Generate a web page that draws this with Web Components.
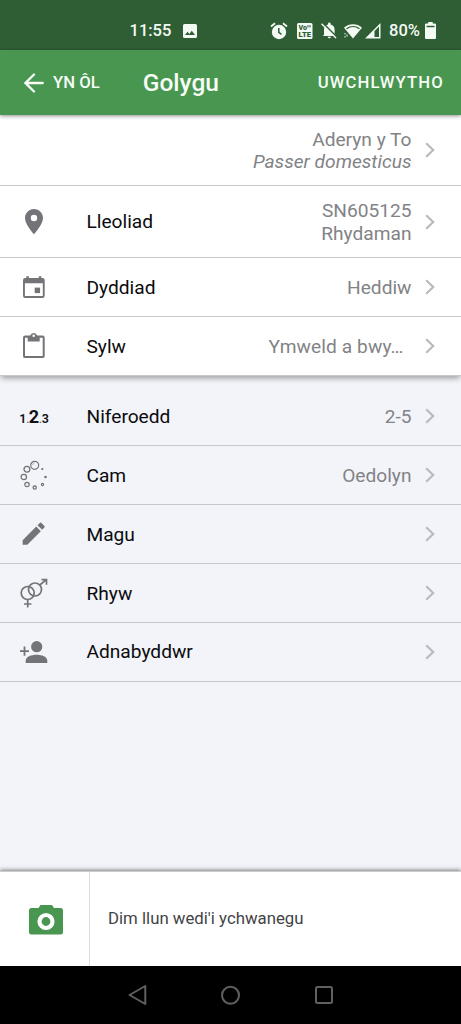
<!DOCTYPE html>
<html lang="cy">
<head>
<meta charset="utf-8">
<title>Golygu</title>
<style>
html,body{margin:0;height:100%}
body{font-family:Roboto,"Liberation Sans",sans-serif;background:#f2f4f9;overflow:hidden}
</style>
</head>
<body>
<record-page></record-page>
<script>
const define=(name,html)=>customElements.define(name,class extends HTMLElement{
  constructor(){super();this.attachShadow({mode:'open'}).innerHTML=html;}
});

const ICONS={
 pin:'<path fill-rule="evenodd" d="M15 2C10 2 6 6 6 11c0 6.500 9 16.300 9 16.300S24 17.500 24 11C24 6 20 2 15 2Zm0 12.200a3.200 3.200 0 1 1 0-6.400 3.200 3.200 0 0 1 0 6.400Z"/>',
 calendar:'<path fill-rule="evenodd" d="M7.300 4.300h2.500v1.700h10V4.300h2.500V6h1.200a2.200 2.200 0 0 1 2.200 2.200v15.600a2.200 2.200 0 0 1-2.200 2.200H6.200A2.200 2.200 0 0 1 4 23.800V8.200A2.200 2.200 0 0 1 6.200 6h1.100ZM5.900 11.200v12.900h17.900V11.200Z"/><path d="M15.700 15.600h5.400v5.500h-5.400z"/>',
 clipboard:'<path fill-rule="evenodd" d="M11.200 4.500a3.700 3.700 0 0 1 7 0h5.300a2.200 2.200 0 0 1 2.200 2.200v18.200a2.200 2.200 0 0 1-2.200 2.200H6.200A2.200 2.200 0 0 1 4 24.900V6.700a2.200 2.200 0 0 1 2.200-2.200ZM8.700 6.700H6v18.400h17.700V6.700h-3v3.900h-12Zm6-3.200a1.300 1.300 0 1 0 0 2.600 1.300 1.300 0 0 0 0-2.600Z"/>',
 stage:'<g fill="none" stroke="#737477"><circle cx="15.700" cy="5.300" r="4" stroke-width="1.200"/><circle cx="7.900" cy="9.200" r="2.900" stroke-width="1.300"/><circle cx="4.800" cy="17" r="2.700" stroke-width="1.200"/><circle cx="8" cy="24.500" r="2.200" stroke-width="1.200"/><circle cx="15.700" cy="27.600" r="1.600" stroke-width="1.300"/><circle cx="23.500" cy="24.500" r="1.100" stroke-width="1.200"/></g><circle cx="26.500" cy="17" r="1.300"/><circle cx="23.300" cy="9.100" r="1.100"/><path d="M13.500 5a2.500 2.500 0 0 1 2-2" fill="none" stroke="#999" stroke-width=".7"/>',
 pencil:'<path transform="scale(1.225)" d="M3 17.250V21h3.750L17.810 9.940l-3.750-3.750zM20.710 7.040a1 1 0 0 0 0-1.410l-2.340-2.340a1 1 0 0 0-1.410 0l-1.830 1.830 3.750 3.750z"/>',
 sex:'<g fill="none" stroke="#737477" stroke-width="1.700"><circle cx="8.700" cy="15" r="6.500"/><circle cx="16" cy="11.500" r="6.500"/><path d="M8.700 21.500v8M5 26h7.400M20.700 7l6.500-5.200M22.500 1.700h5v5"/></g>',
 person:'<circle cx="17.700" cy="9.700" r="5.600"/><path d="M6.700 26v-2.300c0-8 21.600-8 21.600 0V26z"/><path d="M5.500 9.500v9.200M1 14.100h9" stroke="#737477" stroke-width="1.800"/>'
};
customElements.define('row-icon',class extends HTMLElement{
  constructor(){super();this.attachShadow({mode:'open'});}
  connectedCallback(){
    const n=this.getAttribute('name');
    this.shadowRoot.innerHTML=`<style>:host{display:block;width:30px;height:30px}svg{display:block;overflow:visible}</style>`+(ICONS[n]?`<svg width="30" height="30" fill="#737477">${ICONS[n]}</svg>`:'');
  }
});

define('count-icon',`<style>:host{display:flex;width:30px;height:30px;align-items:baseline;justify-content:center;font-weight:600;font-size:12.500px;line-height:31px;color:#111;white-space:nowrap}b{font-size:18px;font-weight:700;margin:0 -.5px}i{font-style:normal;font-weight:400;width:3px;text-align:center;color:#555}</style><span>1</span><i>.</i><b>2</b><i>.</i><span>3</span>`);

define('list-row',`<style>
:host{display:flex;align-items:center;box-sizing:border-box;height:var(--h,58.900px);padding:0 26.500px 0 19px;border-bottom:1.500px solid #c6c7cb;font-size:19.150px}
.icon{width:30px;height:30px;margin-right:37.500px}
.label{color:#0b0b0d;flex:1;padding-top:.8px}
.value{color:#828386;text-align:right;line-height:22.500px;margin-right:13px;padding-top:2.600px}
svg{display:block}
</style><div class="icon"><slot name="icon"></slot></div><div class="label"><slot></slot></div><div class="value"><slot name="value"></slot></div><svg width="10" height="16" fill="none" stroke="#b9babd" stroke-width="2.200"><path d="M1.200 1.200 8.200 8l-7 6.800"/></svg>`);

define('status-bar',`<style>
:host{display:flex;align-items:center;box-sizing:border-box;height:50px;padding:11px 25px 0 129.500px;background:#2f5e35;color:#f4faf4;font-weight:500;font-size:16.500px}
svg{display:block;fill:#f4faf4;flex:none}.gap{flex:1}
</style><span>11:55</span>
<svg style="margin-left:11.500px" width="14" height="14"><path fill-rule="evenodd" d="M1.500 0h11A1.500 1.500 0 0 1 14 1.500v11a1.500 1.500 0 0 1-1.500 1.500h-11A1.500 1.500 0 0 1 0 12.500v-11A1.500 1.500 0 0 1 1.500 0ZM2 11h10L8.800 6.800 6.300 9.900 4.500 7.800Z"/></svg>
<span class="gap"></span>
<svg width="18" height="18"><circle cx="9" cy="10" r="7.200"/><path d="M1 4.500 5 1.200M17 4.500 13 1.200" stroke="#f4faf4" stroke-width="1.800"/><path d="M8.800 6v4.300l2.700 2" fill="none" stroke="#2f5e35" stroke-width="1.500"/></svg>
<svg style="margin-left:8.500px" width="16" height="16"><rect width="15.500" height="16" rx="1.500"/><text x="1.400" y="6.800" font-size="6.400" font-weight="900" fill="#2f5e35" font-family="Roboto" textLength="8.500" lengthAdjust="spacingAndGlyphs">Vo</text><path d="M11 2v2.500M13 2v2.500" stroke="#2f5e35"/><text x="1.500" y="14.300" font-size="6.600" font-weight="900" fill="#2f5e35" font-family="Roboto" textLength="12.500" lengthAdjust="spacingAndGlyphs">LTE</text></svg>
<svg style="margin-left:8px" width="17" height="17"><path d="M3 13V7.500a5.200 5.200 0 0 1 4-5V1.800a1.300 1.300 0 0 1 2.600 0v.7a5.200 5.200 0 0 1 4 5V13l1.400 1H1.500ZM6.700 14.700h3.200a1.600 1.600 0 0 1-3.200 0Z"/><path d="M1.300.5 16.300 15.500" stroke="#2f5e35" stroke-width="1.700"/><path d="M.5 1.700 15 16" stroke="#f4faf4" stroke-width="1.500"/></svg>
<svg style="margin-left:6.500px" width="18" height="16"><path d="M0 4.800a13.500 13.500 0 0 1 18 0L9 15.500Z"/><path d="M2.500 5.700a11 11 0 0 1 13 0" fill="none" stroke="#2f5e35" stroke-width="1.200"/><path d="M1 10v1.500M1 13v1.500M3 11.500v2" stroke="#f4faf4"/></svg>
<svg style="margin-left:3px" width="16" height="16"><path fill-rule="evenodd" d="M0 15.500 15.500 0v15.500ZM9.500 8v6H14V3.600Z"/></svg>
<span style="margin-left:8px">80%</span>
<svg style="margin-left:5px" width="11" height="17"><path fill-rule="evenodd" d="M3.300 0h4.400v1.500h1.800A1.400 1.400 0 0 1 11 3v12.500a1.400 1.400 0 0 1-1.500 1.500h-8A1.400 1.400 0 0 1 0 15.500V3a1.400 1.400 0 0 1 1.500-1.500h1.800ZM1.500 3.700v1.600h8V3.700Z"/></svg>`);

define('app-header',`<style>
:host{display:flex;align-items:center;box-sizing:border-box;height:65px;padding:0 17px 0 24px;background:#48964f;color:#f7fcf7;font-weight:500;font-size:16.700px;position:relative;z-index:2;box-shadow:0 1px 4px rgba(0,0,0,.45)}
svg{display:block;margin-right:9px}h1{font-size:24.500px;font-weight:500;margin:0 0 0 43px;flex:1;line-height:28px}.up{letter-spacing:1.150px}
</style><svg width="20" height="20" fill="none" stroke="#f7fcf7" stroke-width="2.300" stroke-linecap="round"><path d="M18.800 10H1.500M10 1.500 1.500 10l8.500 8.500"/></svg><span>YN ÔL</span><h1>Golygu</h1><span class="up">UWCHLWYTHO</span>`);

define('photo-footer',`<style>
:host{display:flex;align-items:center;height:95px;background:#fff;border-top:1px solid #ccc;box-sizing:border-box;box-shadow:0 -1px 4px rgba(0,0,0,.5);color:#424346;font-size:16.800px;position:relative}
.cam{display:flex;align-items:center;box-sizing:border-box;width:90px;height:100%;padding:2px 0 0 28.600px;border-right:1px solid #ddd}.msg{padding:0 0 2px 18px;line-height:20px}
</style><div class="cam"><svg width="35" height="30"><path fill="#48964f" d="M11.500 0h11.500l2 3h6.500a2.500 2.500 0 0 1 2.500 2.500v21.500a2.500 2.500 0 0 1-2.500 2.500h-29A2.500 2.500 0 0 1 0 27V5.500A2.500 2.500 0 0 1 2.500 3H9.500Z"/><circle cx="17" cy="16.500" r="6.500" fill="none" stroke="#fff" stroke-width="4.200"/></svg></div><div class="msg">Dim llun wedi'i ychwanegu</div>`);

define('nav-bar',`<style>
:host{display:flex;align-items:center;justify-content:space-between;box-sizing:border-box;height:58px;padding:0 126px 0 127px;background:#000}
svg{display:block;fill:none;stroke:#606060;stroke-width:2;stroke-linejoin:round}
</style><svg width="20" height="22"><path d="M18.300 2v18L2.500 11Z"/></svg><svg width="22" height="22"><circle cx="11.500" cy="11.300" r="8.500"/></svg><svg width="22" height="22"><rect x="3" y="3" width="16" height="16" rx="1.500"/></svg>`);

define('record-page',`<style>
:host{display:flex;flex-direction:column;height:1024px;width:461px}
.main{background:#fff;box-shadow:0 3px 6px -1px rgba(0,0,0,.38)}
.more{padding-top:11.300px;flex:1}
em{font-style:italic}.cut{display:block;margin-right:8px;letter-spacing:.1px}
</style>
<status-bar></status-bar><app-header></app-header>
<div class="main">
<list-row style="--h:71px"><span slot="value">Aderyn y To<br><em>Passer domesticus</em></span></list-row>
<list-row style="--h:72px"><row-icon slot="icon" name="pin"></row-icon>Lleoliad<span slot="value">SN605125<br>Rhydaman</span></list-row>
<list-row><row-icon slot="icon" name="calendar"></row-icon>Dyddiad<span slot="value">Heddiw</span></list-row>
<list-row><row-icon slot="icon" name="clipboard"></row-icon>Sylw<span slot="value" class="cut">Ymweld a bwy…</span></list-row>
</div>
<div class="more">
<list-row><count-icon slot="icon"></count-icon>Niferoedd<span slot="value">2-5</span></list-row>
<list-row><row-icon slot="icon" name="stage"></row-icon>Cam<span slot="value">Oedolyn</span></list-row>
<list-row><row-icon slot="icon" name="pencil"></row-icon>Magu</list-row>
<list-row><row-icon slot="icon" name="sex"></row-icon>Rhyw</list-row>
<list-row><row-icon slot="icon" name="person"></row-icon>Adnabyddwr</list-row>
</div>
<photo-footer></photo-footer><nav-bar></nav-bar>`);
</script>
</body>
</html>
